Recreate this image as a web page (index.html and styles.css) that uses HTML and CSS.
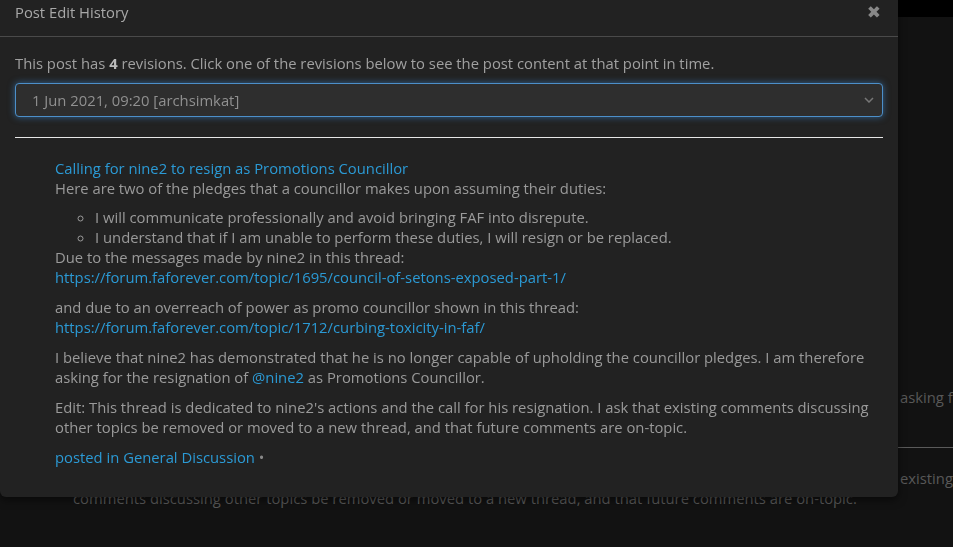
FILE: index.html
```html
<!DOCTYPE html>
<html lang="en">
<head>
    <meta charset="UTF-8">
    <meta name="viewport" content="width=device-width, initial-scale=1.0">
    <title>Post Edit History</title>

    <link rel="stylesheet" href="styles.css">
</head>
<body>
    <div id="page">
        <div id="topbar"></div>
        <div id="page-post">
            <div class="bg-line tail">asking for the resignation of @nine2 as Promotions Councillor.</div>
            <hr class="bg-rule">
            <div class="bg-line tail">existing comments discussing other topics</div>
            <div class="bg-line">comments discussing other topics be removed or moved to a new thread, and that future comments are on-topic.</div>
        </div>
    </div>

    <div id="modal">
        <div class="modal-header">
            <span class="modal-title">Post Edit History</span>
            <span class="modal-close">&#10006;</span>
        </div>

        <div class="modal-body">
            <p class="intro">This post has <strong>4</strong> revisions. Click one of the revisions below to see the post content at that point in time.</p>

            <div class="revision-select">
                <span>1 Jun 2021, 09:20 [archsimkat]</span>
                <svg width="10" height="6" viewBox="0 0 10 6"><path d="M1 1 L5 5 L9 1" fill="none" stroke="#777" stroke-width="1.5"/></svg>
            </div>

            <hr class="divider">

            <div class="post">
                <p class="first">
                    <a href="#">Calling for nine2 to resign as Promotions Councillor</a><br>
                    Here are two of the pledges that a councillor makes upon assuming their duties:
                </p>
                <ul>
                    <li>I will communicate professionally and avoid bringing FAF into disrepute.</li>
                    <li>I understand that if I am unable to perform these duties, I will resign or be replaced.</li>
                </ul>
                <p class="tight">
                    Due to the messages made by nine2 in this thread:<br>
                    <a href="#">https://forum.faforever.com/topic/1695/council-of-setons-exposed-part-1/</a>
                </p>
                <p>
                    and due to an overreach of power as promo councillor shown in this thread:<br>
                    <a href="#">https://forum.faforever.com/topic/1712/curbing-toxicity-in-faf/</a>
                </p>
                <p>I believe that nine2 has demonstrated that he is no longer capable of upholding the councillor pledges. I am therefore asking for the resignation of <a href="#">@nine2</a> as Promotions Councillor.</p>
                <p>Edit: This thread is dedicated to nine2's actions and the call for his resignation. I ask that existing comments discussing other topics be removed or moved to a new thread, and that future comments are on-topic.</p>
                <p class="posted"><a href="#">posted in General Discussion</a> <span class="dot">&bull;</span></p>
            </div>
        </div>
    </div>
</body>
</html>
```

FILE: styles.css
```css
body, html {
    padding: 0;
    margin: 0;
}

body {
    background-color: #121212;
    font-family: "Open Sans", sans-serif;
    font-size: 14.8px;
    line-height: 20px;
    overflow: hidden;
    height: 547px;
}

#page {
    overflow: hidden;
    height: 547px;
}

#topbar {
    height: 17px;
    background-color: #000;
}

#page-post {
    padding-top: 370px;
    color: #585858;
}

.bg-line {
    white-space: nowrap;
    margin-left: 73px;
}

.bg-line.tail {
    margin-left: 900px;
}

.bg-rule {
    border: none;
    border-top: 1px solid #5a5a5a;
    margin: 40px 0 20px 898px;
}

#modal {
    position: fixed;
    left: 0;
    top: -13px;
    width: 898px;
    background-color: #222;
    border-radius: 6px;
    box-shadow: 0 3px 9px rgba(0, 0, 0, 0.5);
}

.modal-header {
    display: flex;
    justify-content: space-between;
    align-items: center;
    padding: 15px 15px 14px 15px;
    border-bottom: 1px solid #4a4a4a;
    color: #a8a8a8;
}

.modal-title {
    font-weight: 500;
}

.modal-close {
    color: #888;
    font-family: "DejaVu Sans", sans-serif;
    font-size: 17px;
    padding-right: 2px;
}

.modal-body {
    padding: 16px 15px 30px 15px;
    color: #9a9a9a;
}

.modal-body p {
    margin: 0 0 10px 0;
}

.modal-body strong {
    color: #bbb;
}

.intro {
    color: #a0a0a0;
}

.revision-select {
    display: flex;
    justify-content: space-between;
    align-items: center;
    height: 32px;
    padding: 0 8px 0 16px;
    border: 1px solid #4c8fc9;
    border-radius: 4px;
    background-color: #2e2e2e;
    box-shadow: 0 0 7px rgba(66, 150, 230, 0.55);
    color: #909090;
}

.divider {
    border: none;
    border-top: 1px solid #e6e6e6;
    margin: 20px 0 20px 0;
}

.post {
    padding-left: 40px;
}

.post a {
    color: #2b9ad5;
    text-decoration: none;
}

.post ul {
    margin: 9px 0 0 0;
    padding-left: 40px;
    list-style-type: circle;
}

.post p.first {
    margin-bottom: 0;
}

.post p.posted {
    margin-bottom: 0;
}

.dot {
    color: #888;
}
```
